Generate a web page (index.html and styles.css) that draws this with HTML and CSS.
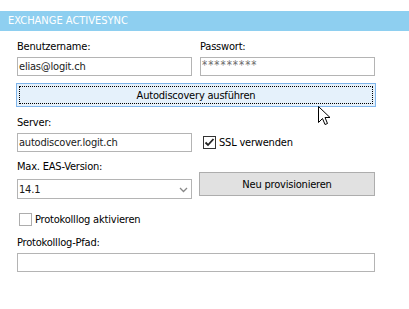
FILE: index.html
```html
<!DOCTYPE html>
<html>
<head>
<meta charset="utf-8">
<link rel="stylesheet" href="styles.css">
</head>
<body>
<div class="page">
  <div class="header">EXCHANGE ACTIVESYNC</div>
  <div class="form">
    <div class="row2 row-creds">
      <div class="field">
        <div class="label">Benutzername:</div>
        <div class="input">elias@logit.ch</div>
      </div>
      <div class="field">
        <div class="label">Passwort:</div>
        <div class="input pw">*********</div>
      </div>
    </div>
    <div class="btn btn-focus"><span class="focus-ring">Autodiscovery ausführen</span></div>
    <div class="label label-server">Server:</div>
    <div class="row2 row-server">
      <div class="input">autodiscover.logit.ch</div>
      <div class="check">
        <span class="box checked">
          <svg width="11" height="11" viewBox="0 0 11 11"><path d="M1.5 5.5 L4 8 L9.5 2" fill="none" stroke="#222" stroke-width="1.8"/></svg>
        </span>
        <span>SSL verwenden</span>
      </div>
    </div>
    <div class="row2 row-eas">
      <div class="field">
        <div class="label">Max. EAS-Version:</div>
        <div class="combo">
          <span>14.1</span>
          <svg class="chev" width="9" height="6" viewBox="0 0 9 6"><path d="M1 1 L4.5 4.5 L8 1" fill="none" stroke="#888" stroke-width="1.3"/></svg>
        </div>
      </div>
      <div class="btn btn-gray">Neu provisionieren</div>
    </div>
    <div class="check check-log">
      <span class="box"></span>
      <span>Protokolllog aktivieren</span>
    </div>
    <div class="label label-path">Protokolllog-Pfad:</div>
    <div class="input input-wide"></div>
  </div>
  <svg class="cursor" width="13" height="20" viewBox="0 0 13 20">
    <path d="M0.5 0.5 L0.5 16.5 L4.5 12.5 L7 18.5 L9.5 17.5 L7 11.5 L12 11.5 Z" fill="#fff" stroke="#000" stroke-width="1"/>
  </svg>
</div>
</body>
</html>
```
FILE: styles.css
```css
html, body {
  margin: 0;
  padding: 0;
  background: #fff;
}
body {
  width: 409px;
  height: 309px;
  overflow: hidden;
  font-family: "DejaVu Sans Condensed", "DejaVu Sans", sans-serif;
  font-size: 11px;
  letter-spacing: -0.2px;
  color: #000;
}
.page {
  position: relative;
  height: 309px;
}
.header {
  margin-top: 11px;
  height: 20px;
  line-height: 20px;
  background: #8ecff0;
  color: #fff;
  padding-left: 8px;
  font-size: 11px;
  letter-spacing: 0;
}
.form {
  display: flex;
  flex-direction: column;
  padding-left: 17px;
  width: 358px;
}
.row2 {
  display: grid;
  grid-template-columns: 175px 175px;
  column-gap: 8px;
}
.field {
  display: flex;
  flex-direction: column;
}
.label {
  height: 14px;
  line-height: 14px;
  margin-bottom: 3px;
}
.row-creds {
  margin-top: 9px;
}
.input {
  box-sizing: border-box;
  height: 19px;
  border: 1px solid #b4b4b4;
  background: #fff;
  line-height: 17px;
  padding-left: 1px;
  color: #1a1a1a;
  white-space: nowrap;
  overflow: hidden;
}
.input.pw {
  color: #6b6b6b;
  letter-spacing: 1px;
  font-size: 11.5px;
  line-height: 14px;
}
.btn {
  box-sizing: border-box;
  display: flex;
  align-items: center;
  justify-content: center;
  height: 24px;
}
.btn-focus {
  margin: 7px 0 0 -1px;
  width: 360px;
  border: 1px solid #7eb4ea;
  background: #e5f1fb;
  padding: 2px;
}
.focus-ring {
  box-sizing: border-box;
  flex: 1;
  align-self: stretch;
  border: 1px dotted #000;
  display: flex;
  align-items: center;
  justify-content: center;
}
.label-server {
  margin-top: 9px;
}
.row-server {
  align-items: center;
}
.check {
  display: flex;
  align-items: center;
  gap: 3px;
  margin-left: 3px;
}
.box {
  box-sizing: border-box;
  width: 13px;
  height: 13px;
  border: 1px solid #333;
  background: #fff;
  display: flex;
  align-items: center;
  justify-content: center;
}
.box svg { display: block; }
.check-log .box {
  border-color: #adadad;
}
.row-eas {
  margin-top: 8px;
  align-items: end;
}
.combo {
  box-sizing: border-box;
  height: 20px;
  margin-top: 2px;
  border: 1px solid #b4b4b4;
  display: flex;
  align-items: center;
  justify-content: space-between;
  padding: 0 3px 0 1px;
  color: #1a1a1a;
  background: #fff;
}
.chev { display: block; margin-top: 2px; }
.btn-gray {
  margin-left: -1px;
  margin-bottom: 3px;
  width: 176px;
  border: 1px solid #adadad;
  background: #e1e1e1;
}
.check-log {
  margin-top: 14px;
  margin-left: 2px;
}
.label-path {
  margin-top: 10px;
}
.input-wide {
  width: 358px;
}
.cursor {
  position: absolute;
  left: 318px;
  top: 95px;
}
```
